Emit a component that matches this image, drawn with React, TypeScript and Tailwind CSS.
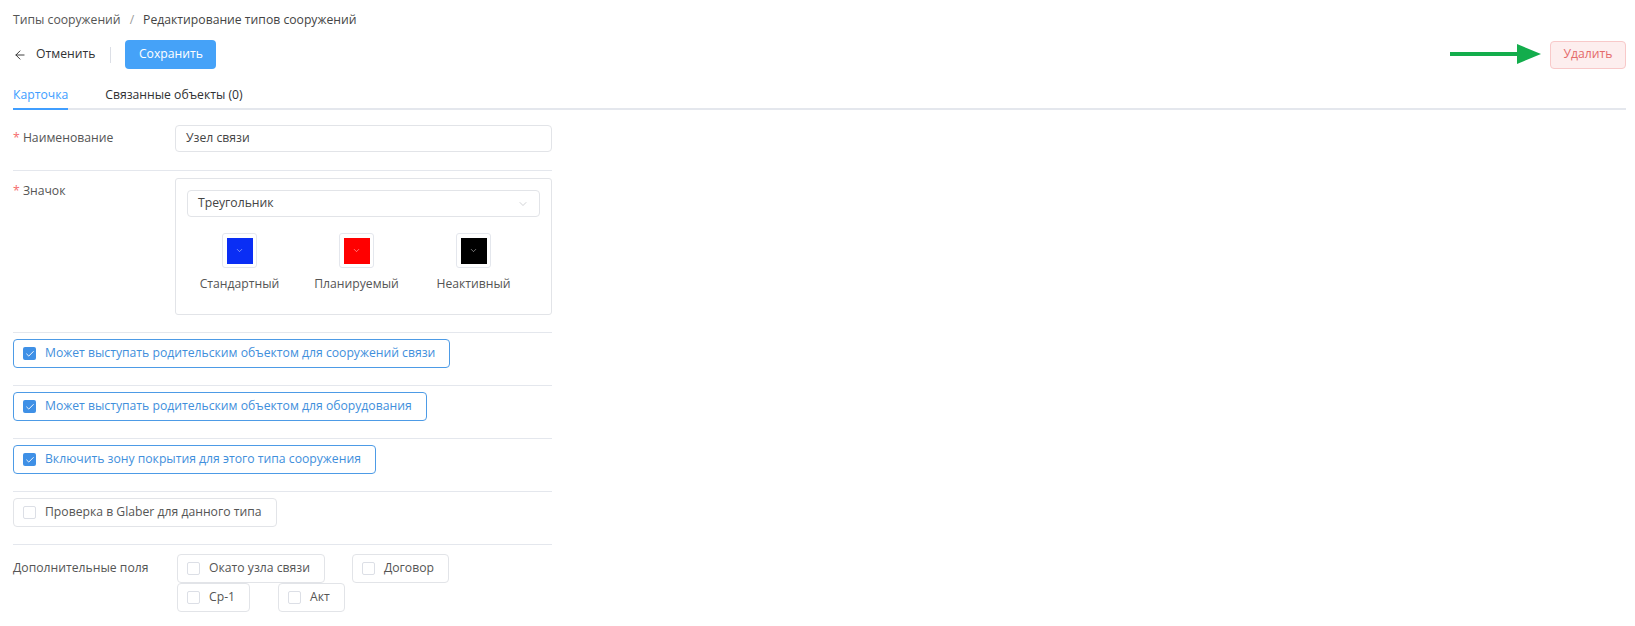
import { ArrowLeft, ChevronDown, Check } from 'lucide-react';

type Box = { label: string; checked?: boolean };

function CheckPill({ label, checked }: Box) {
  return (
    <label
      className={
        checked
          ? 'inline-flex h-[29px] items-center gap-[9px] rounded-[4px] border border-[#4d9be6] pl-[9px] pr-[14px] text-[#3f8fdc]'
          : 'inline-flex h-[29px] items-center gap-[9px] rounded-[4px] border border-[#e2e4e8] pl-[9px] pr-[14px] text-[#555]'
      }
    >
      {checked ? (
        <span className="flex h-[13px] w-[13px] items-center justify-center rounded-[2px] bg-[#3f90e6]">
          <Check size={10} strokeWidth={2.2} className="text-white" />
        </span>
      ) : (
        <span className="h-[13px] w-[13px] rounded-[2px] border border-[#dcdfe6] bg-white" />
      )}
      <span className="whitespace-nowrap">{label}</span>
    </label>
  );
}

function Swatch({ color, label }: { color: string; label: string }) {
  return (
    <div className="flex w-[117px] flex-col items-center">
      <div className="flex h-[35px] w-[35px] items-center justify-center rounded-[3px] border border-[#e4e7ed] bg-white">
        <div className={`flex h-[26px] w-[26px] items-center justify-center ${color}`}>
          <ChevronDown size={9} strokeWidth={1.5} className="text-white/80" />
        </div>
      </div>
      <span className="mt-[7px] leading-[18px] text-[#555]">{label}</span>
    </div>
  );
}

export default function App() {
  return (
    <div className="min-h-[626px] bg-white pl-[13px] pr-[9px] font-['Open_Sans',sans-serif] text-[12.2px] text-[#555]">
      {/* breadcrumb */}
      <div className="flex h-[40px] items-center leading-[18px]">
        <span className="text-[#555]">Типы сооружений</span>
        <span className="mx-[9px] text-[#9a9a9a]">/</span>
        <span className="text-[#444]">Редактирование типов сооружений</span>
      </div>

      {/* actions */}
      <div className="flex h-[29px] items-center justify-between">
        <div className="flex items-center">
          <ArrowLeft size={14} strokeWidth={1.6} className="text-[#333]" />
          <span className="ml-[9px] text-[#303133]">Отменить</span>
          <span className="ml-[15px] h-[16px] w-px bg-[#dcdfe6]" />
          <button className="ml-[14px] h-[29px] w-[91px] rounded-[4px] bg-[#45a2f8] text-white">Сохранить</button>
        </div>
        <div className="flex items-center">
          <svg width="91" height="20" viewBox="0 0 91 20" className="mt-[-2px]">
            <line x1="0" y1="10" x2="70" y2="10" stroke="#13ad4c" strokeWidth="4" strokeLinecap="round" />
            <polygon points="67,0 91,10 67,20" fill="#13ad4c" />
          </svg>
          <button className="ml-[9px] h-[28px] w-[76px] rounded-[4px] border border-[#f8c9c9] bg-[#fdeeee] text-[#e46a6a]">
            Удалить
          </button>
        </div>
      </div>

      {/* tabs */}
      <div className="mt-[17px] flex gap-[37px] border-b-2 border-[#e4e7ed]">
        <div className="-mb-[2px] border-b-2 border-[#409eff] pb-[4px] leading-[18px] text-[#409eff]">Карточка</div>
        <div className="pb-[4px] leading-[18px] text-[#303133]">Связанные объекты (0)</div>
      </div>

      {/* form */}
      <div className="w-[539px]">
        <div className="flex items-center border-b border-[#e4e7ed] pb-[18px] pt-[15px]">
          <div className="w-[162px]">
            <span className="text-[#f56c6c]">*</span> Наименование
          </div>
          <div className="flex h-[27px] flex-1 items-center rounded-[4px] border border-[#e2e4e8] px-[10px] text-[#444]">
            Узел связи
          </div>
        </div>

        <div className="flex border-b border-[#e4e7ed] pb-[17px] pt-[7px]">
          <div className="w-[162px] pt-[4px] leading-[18px]">
            <span className="text-[#f56c6c]">*</span> Значок
          </div>
          <div className="h-[137px] flex-1 rounded-[3px] border border-[#e2e4e8] px-[11px] pt-[11px]">
            <div className="flex h-[27px] items-center justify-between rounded-[4px] border border-[#e2e4e8] pl-[10px] pr-[10px] text-[#444]">
              <span>Треугольник</span>
              <ChevronDown size={12} strokeWidth={1.2} className="text-[#b0b3b8]" />
            </div>
            <div className="-ml-[6px] mt-[16px] flex">
              <Swatch color="bg-[#0a2ef5]" label="Стандартный" />
              <Swatch color="bg-[#ff0000]" label="Планируемый" />
              <Swatch color="bg-black" label="Неактивный" />
            </div>
          </div>
        </div>

        <div className="border-b border-[#e4e7ed] pb-[17px] pt-[6px]">
          <CheckPill checked label="Может выступать родительским объектом для сооружений связи" />
        </div>
        <div className="border-b border-[#e4e7ed] pb-[17px] pt-[6px]">
          <CheckPill checked label="Может выступать родительским объектом для оборудования" />
        </div>
        <div className="border-b border-[#e4e7ed] pb-[17px] pt-[6px]">
          <CheckPill checked label="Включить зону покрытия для этого типа сооружения" />
        </div>
        <div className="border-b border-[#e4e7ed] pb-[17px] pt-[6px]">
          <CheckPill label="Проверка в Glaber для данного типа" />
        </div>

        <div className="flex pt-[9px]">
          <div className="flex h-[28px] w-[164px] items-center">Дополнительные поля</div>
          <div className="flex flex-col">
            <div className="flex gap-[27px]">
              <CheckPill label="Окато узла связи" />
              <CheckPill label="Договор" />
            </div>
            <div className="flex gap-[28px]">
              <CheckPill label="Ср-1" />
              <CheckPill label="Акт" />
            </div>
          </div>
        </div>
      </div>
    </div>
  );
}
